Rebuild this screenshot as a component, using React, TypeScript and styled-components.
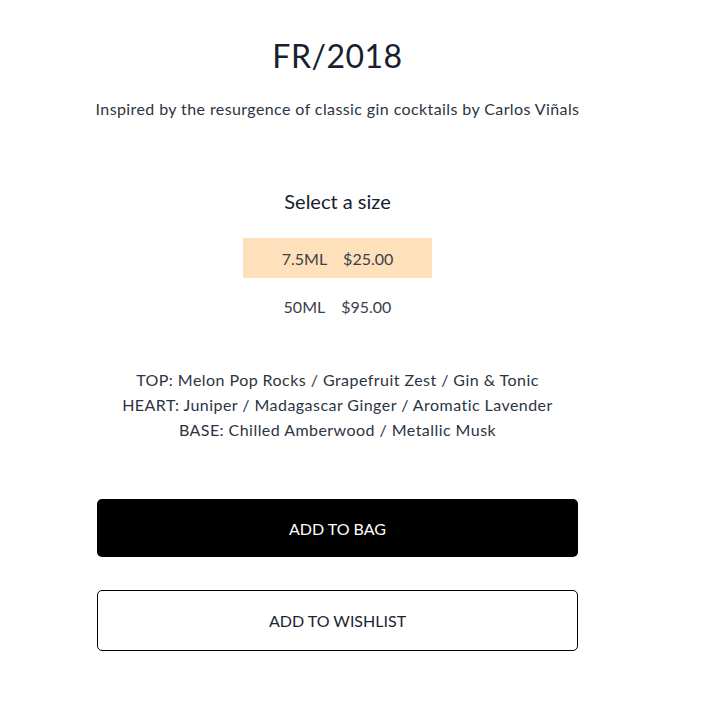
import { useState } from "react";
import styled, { createGlobalStyle } from "styled-components";

const sizes = [
    { label: "7.5ML", price: "$25.00" },
    { label: "50ML", price: "$95.00" },
];

const notes = [
    "TOP: Melon Pop Rocks / Grapefruit Zest / Gin & Tonic",
    "HEART: Juniper / Madagascar Ginger / Aromatic Lavender",
    "BASE: Chilled Amberwood / Metallic Musk",
];

const App = () => {
    const [selected, setSelected] = useState(0);

    return (
        <>
            <GlobalStyle />
            <Page>
                <Title>FR/2018</Title>
                <Description>Inspired by the resurgence of classic gin cocktails by Carlos Viñals</Description>

                <SizeHeading>Select a size</SizeHeading>
                <SizeList>
                    {sizes.map((s, i) => (
                        <SizeOption key={s.label} $active={i === selected} onClick={() => setSelected(i)}>
                            <span>{s.label}</span>
                            <span>{s.price}</span>
                        </SizeOption>
                    ))}
                </SizeList>

                <Notes>
                    {notes.map((n) => (
                        <div key={n}>{n}</div>
                    ))}
                </Notes>

                <Actions>
                    <BagButton>ADD TO BAG</BagButton>
                    <WishButton>ADD TO WISHLIST</WishButton>
                </Actions>
            </Page>
        </>
    );
};

const GlobalStyle = createGlobalStyle`
    body {
        margin: 0;
        background: #fff;
        font-family: Lato, "Open Sans", sans-serif;
        color: #1b2433;
    }
`;

const Page = styled.div`
    width: 481px;
    margin-left: 97px;
    padding-top: 35px;
    display: flex;
    flex-direction: column;
    align-items: center;
    text-align: center;
`;

const Title = styled.h1`
    margin: 0;
    font-size: 32px;
    font-weight: 400;
    line-height: 42px;
    letter-spacing: 0.5px;
    color: #17202e;
`;

const Description = styled.p`
    margin: 20px -10px 0;
    font-size: 16px;
    line-height: 24px;
    letter-spacing: 0.4px;
    color: #2c3442;
    white-space: nowrap;
`;

const SizeHeading = styled.h2`
    margin: 66px 0 0;
    font-size: 20px;
    font-weight: 400;
    line-height: 28px;
    color: #17202e;
`;

const SizeList = styled.div`
    margin-top: 23px;
    display: flex;
    flex-direction: column;
    gap: 8px;
`;

const SizeOption = styled.div<{ $active: boolean }>`
    width: 189px;
    height: 40px;
    display: flex;
    align-items: center;
    justify-content: center;
    gap: 16px;
    font-size: 16px;
    color: #3a404c;
    background: ${(p) => (p.$active ? "#fee0bb" : "transparent")};
    cursor: pointer;
`;

const Notes = styled.div`
    margin-top: 41px;
    font-size: 16px;
    line-height: 25px;
    letter-spacing: 0.45px;
    color: #2c3442;
    white-space: nowrap;
`;

const Actions = styled.div`
    align-self: stretch;
    margin-top: 57px;
    display: flex;
    flex-direction: column;
    gap: 33px;
`;

const BagButton = styled.button`
    height: 58px;
    border: none;
    border-radius: 5px;
    background: #000;
    color: #fff;
    font-family: inherit;
    font-size: 16px;
    cursor: pointer;
`;

const WishButton = styled.button`
    height: 61px;
    border: 1px solid #000;
    border-radius: 5px;
    background: #fff;
    color: #1b2433;
    font-family: inherit;
    font-size: 16px;
    cursor: pointer;
`;

export default App;
